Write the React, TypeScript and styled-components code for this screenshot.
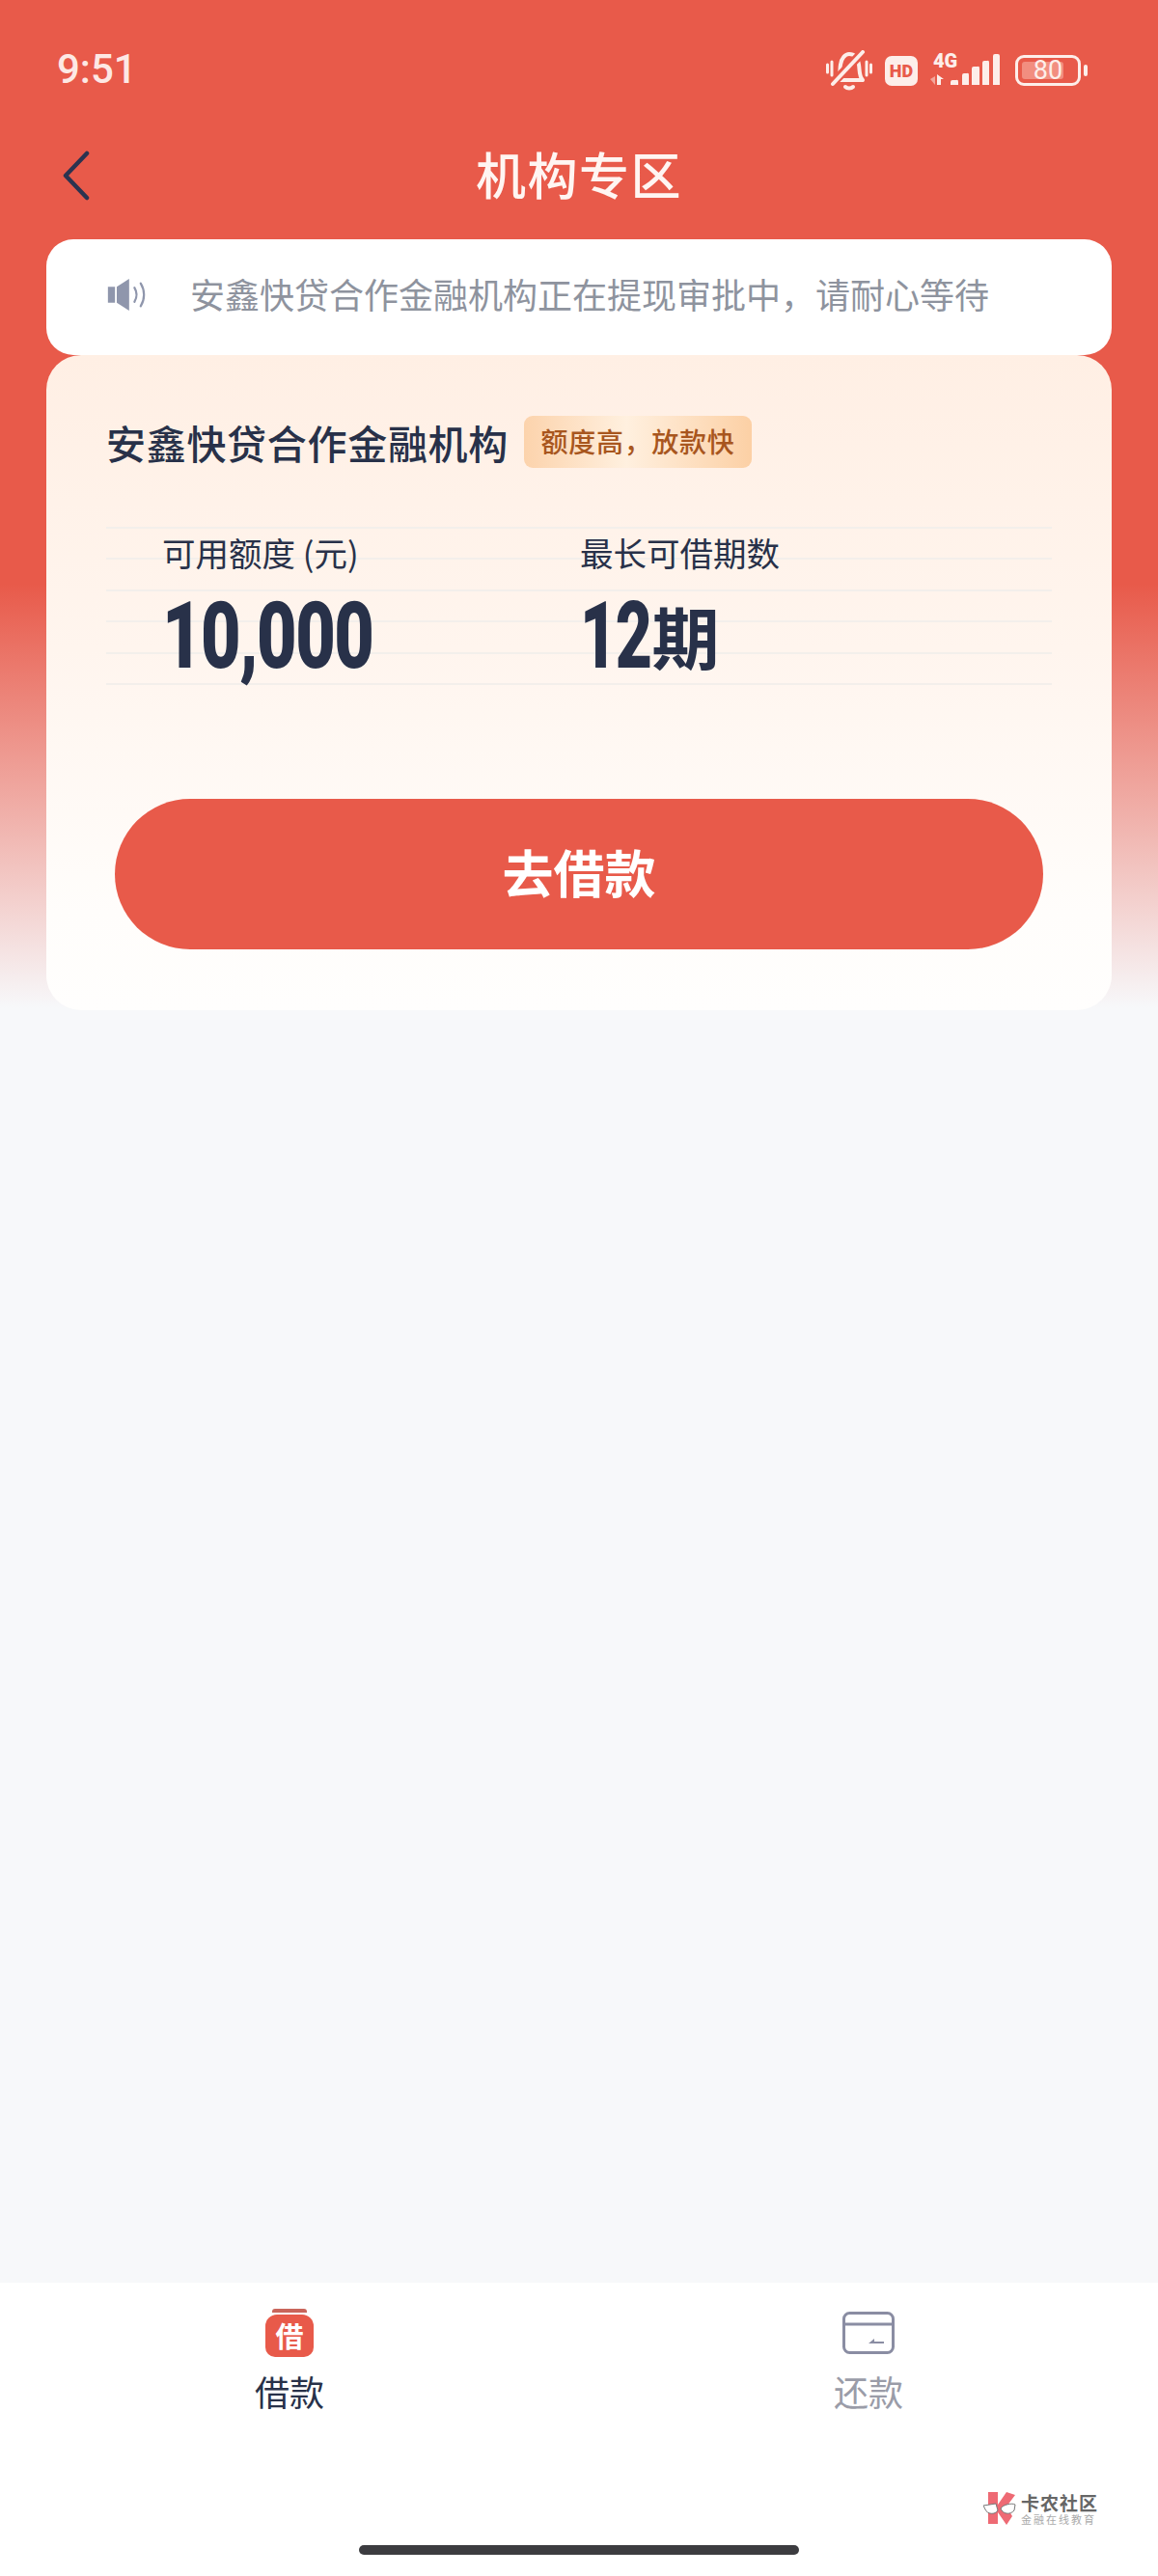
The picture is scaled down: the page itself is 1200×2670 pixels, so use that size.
import React from "react";
import styled, { createGlobalStyle } from "styled-components";

const CJK = `"Noto Sans CJK SC", "Noto Sans", sans-serif`;

const App = () => {
   return (
      <Page>
         <GlobalStyle />
         <StatusBar>
            <Time>9:51</Time>
            <StatusIcons>
               <MuteIcon />
               <HdBadge>HD</HdBadge>
               <SignalSlot><SignalIcon /></SignalSlot>
               <Battery>
                  <BatteryBody>
                     <BatteryLevel />
                     <BatteryText>80</BatteryText>
                  </BatteryBody>
                  <BatteryNub />
               </Battery>
            </StatusIcons>
         </StatusBar>
         <Header>
            <BackButton>
               <svg width="30" height="52" viewBox="0 0 30 52" fill="none">
                  <path d="M26 3 L4 26 L26 49" stroke="#2b3350" strokeWidth="4.5" strokeLinecap="round" strokeLinejoin="round" />
               </svg>
            </BackButton>
            <Title>机构专区</Title>
         </Header>
         <Content>
            <Notice>
               <SpeakerSlot><SpeakerIcon /></SpeakerSlot>
               <NoticeText>安鑫快贷合作金融机构正在提现审批中，请耐心等待</NoticeText>
            </Notice>
            <Card>
               <CardHead>
                  <CardTitle>安鑫快贷合作金融机构</CardTitle>
                  <Tag>额度高，放款快</Tag>
               </CardHead>
               <Stats>
                  <Stat $width={433}>
                     <StatLabel>可用额度 (元)</StatLabel>
                     <StatValue><Digits $scale={0.74}>10,000</Digits></StatValue>
                  </Stat>
                  <Stat>
                     <StatLabel>最长可借期数</StatLabel>
                     <StatValue><Digits $scale={0.68}>12</Digits><Unit>期</Unit></StatValue>
                  </Stat>
               </Stats>
               <BorrowButton>去借款</BorrowButton>
            </Card>
         </Content>
         <TabBar>
            <Tabs>
               <Tab>
                  <BorrowIcon>
                     <BorrowLid />
                     <BorrowBody>借</BorrowBody>
                  </BorrowIcon>
                  <TabLabel $active>借款</TabLabel>
               </Tab>
               <Tab>
                  <RepaySlot><RepayIcon /></RepaySlot>
                  <TabLabel>还款</TabLabel>
               </Tab>
            </Tabs>
            <HomeIndicator />
            <Watermark>
               <WatermarkLogo />
               <WatermarkText>
                  <WatermarkName>卡农社区</WatermarkName>
                  <WatermarkSub>金融在线教育</WatermarkSub>
               </WatermarkText>
            </Watermark>
         </TabBar>
      </Page>
   );
};

const MuteIcon = () => (
   <svg width="48" height="42" viewBox="0 0 48 42" fill="none" stroke="#fdeeea" strokeLinecap="round">
      <path d="M12 31 C15 27 14 20 15 15 C16 8 20 4 24 4 C30 4 33 9 34 15 C35 21 34 27 38 31 Z" strokeWidth="4" strokeLinejoin="round" />
      <path d="M20 38 C22 40 26 40 28 38" strokeWidth="4" />
      <path d="M7 34 L38 2" strokeWidth="9" stroke="#e85a4a" />
      <path d="M7 35 L38 2" strokeWidth="4" />
      <path d="M1.5 15 V23 M6 12 V26 M42 12 V26 M46.5 15 V23" strokeWidth="3" />
   </svg>
);

const SignalIcon = () => (
   <svg width="72" height="40" viewBox="0 -6 72 40" fill="none">
      <path d="M0 27 L5 24 V33 Z" fill="#f3a69b" />
      <path d="M7 22 L14 27 H11 V33 H7 Z" fill="#fdeeea" />
      <path d="M21 33 V30 Q21 28 23 28 H27 Q29 27 29 30 V33 Z M33 33 V23 Q33 21 35 21 H38 Q40 20 40 23 V33 Z M43 33 V16 Q43 14 45 14 H49 Q51 13 51 16 V33 Z M54 33 V10 Q54 8 56 8 H59 Q61 7 61 10 V33 Z M65 33 V3 Q65 1 67 1 H70 Q72 1 72 3 V33 Z" fill="#fdeeea" />
      <SignalText x="3" y="15">4G</SignalText>
   </svg>
);

const SpeakerIcon = () => (
   <svg width="44" height="33" viewBox="0 0 44 36" fill="none">
      <path d="M0 9 H8 V27 H0 Z" fill="#8f96ac" />
      <path d="M10 9 L24 0 V36 L10 27 Z" fill="#8f96ac" />
      <path d="M30 10 C33 15 33 21 30 26" stroke="#8f96ac" strokeWidth="2.4" strokeLinecap="round" />
      <path d="M37 5 C42 13 42 23 37 31" stroke="#8f96ac" strokeWidth="2.4" strokeLinecap="round" />
   </svg>
);

const RepayIcon = () => (
   <svg width="54" height="44" viewBox="0 0 54 44" fill="none">
      <rect x="1.5" y="1.5" width="51" height="41" rx="6" stroke="#8a8da3" strokeWidth="3" />
      <path d="M1.5 13 H52.5" stroke="#8a8da3" strokeWidth="3" />
      <path d="M27 33 L33 28 V31 H43 V33 Z" fill="#8a8da3" />
   </svg>
);

const WatermarkLogo = () => (
   <svg width="36" height="36" viewBox="0 0 36 36">
      <path d="M5 1 H15 V14 L24 1 L33 4 L24 16 L30 26 L24 35 L15 22 V34 H5 Z" fill="#ee6a74" />
      <path d="M0 15 L13 13 L15 20 C12 25 4 24 2 19 Z M18 18 C20 14 30 12 33 14 L32 20 C28 25 20 24 18 18 Z" fill="#fff" stroke="#777" strokeWidth="1" />
   </svg>
);

const GlobalStyle = createGlobalStyle`
   html, body {
      margin: 0;
      padding: 0;
      background: #f7f8fa;
   }

   * {
      box-sizing: border-box;
   }
`;

const Page = styled.div`
   position: relative;
   width: 1200px;
   height: 2670px;
   display: flex;
   flex-flow: column;
   font-family: ${CJK};
   background: linear-gradient(to bottom, #e85a4a 0, #e85a4a 605px, #f7f8fa 1045px, #f7f8fa 100%);
`;

const StatusBar = styled.div`
   height: 144px;
   padding: 52px 73px 0 59px;
   display: flex;
   justify-content: space-between;
   align-items: flex-start;
`;

const Time = styled.div`
   font-family: Roboto, sans-serif;
   font-size: 42px;
   font-weight: 500;
   line-height: 40px;
   color: #fde8e4;
`;

const StatusIcons = styled.div`
   display: flex;
   align-items: center;
   height: 42px;
   gap: 13px;
`;

const HdBadge = styled.div`
   width: 34px;
   height: 31px;
   border-radius: 7px;
   background: #fdeeea;
   color: #e85a4a;
   font-family: Roboto, sans-serif;
   font-weight: 900;
   font-size: 18px;
   line-height: 31px;
   text-align: center;
`;

const SignalSlot = styled.div`
   display: flex;
   margin-bottom: 8px;
`;

const SignalText = styled.text`
   font-family: Roboto, sans-serif;
   font-weight: 900;
   font-size: 20px;
   fill: #fdeeea;
`;

const Battery = styled.div`
   display: flex;
   align-items: center;
   gap: 3px;
   margin-left: 3px;
`;

const BatteryBody = styled.div`
   position: relative;
   width: 68px;
   height: 32px;
   border: 3px solid #fdeeea;
   border-radius: 9px;
   display: flex;
   align-items: center;
   justify-content: center;
`;

const BatteryLevel = styled.div`
   position: absolute;
   left: 4px;
   top: 4px;
   bottom: 4px;
   width: 43px;
   border-radius: 3px;
   background: #f28e80;
`;

const BatteryText = styled.span`
   position: relative;
   font-family: Roboto, sans-serif;
   font-size: 27px;
   line-height: 26px;
   color: #fdeeea;
`;

const BatteryNub = styled.div`
   width: 4px;
   height: 12px;
   border-radius: 2px;
   background: #fdeeea;
`;

const Header = styled.div`
   position: relative;
   height: 104px;
   display: flex;
   align-items: flex-start;
   justify-content: center;
`;

const BackButton = styled.div`
   position: absolute;
   left: 64px;
   top: 12px;
   line-height: 0;
`;

const Title = styled.h1`
   margin: -2px 0 0;
   height: 76px;
   font-size: 52px;
   line-height: 76px;
   font-weight: 500;
   letter-spacing: 1.5px;
   color: #fff5f2;
`;

const Content = styled.div`
   flex: 1;
   padding: 0 48px;
`;

const Notice = styled.div`
   height: 120px;
   padding: 0 0 8px 62px;
   display: flex;
   align-items: center;
   gap: 43px;
   background: #fff;
   border-radius: 28px;
`;

const SpeakerSlot = styled.div`
   display: flex;
   padding-top: 2px;
`;

const NoticeText = styled.div`
   font-size: 36px;
   color: #8e939e;
   white-space: nowrap;
`;

const Card = styled.div`
   height: 679px;
   padding: 62px 62px 0 62px;
   border-radius: 36px;
   background: linear-gradient(to bottom, #ffefe4 0%, #fff5ee 45%, #fffdfb 85%, #fffefd 100%);
`;

const CardHead = styled.div`
   display: flex;
   align-items: center;
   gap: 16px;
   height: 56px;
`;

const CardTitle = styled.div`
   font-size: 41px;
   font-weight: 500;
   letter-spacing: 0.7px;
   color: #283149;
   white-space: nowrap;
`;

const Tag = styled.div`
   width: 236px;
   height: 54px;
   border-radius: 9px;
   text-align: center;
   font-size: 28px;
   line-height: 52px;
   letter-spacing: 0.7px;
   font-weight: 500;
   color: #a8561e;
   background: linear-gradient(to right, #fcd3ac, #fff0df 45%, #fcd0a5);
`;

const Stats = styled.div`
   width: 980px;
   height: 164px;
   margin-top: 60px;
   padding-left: 58px;
   display: flex;
   background: repeating-linear-gradient(to bottom, #f3efeb 0, #f3efeb 2px, transparent 2px, transparent 32.4px);
`;

const Stat = styled.div<{ $width?: number }>`
   width: ${(p) => (p.$width ? `${p.$width}px` : "auto")};
   display: flex;
   flex-flow: column;
`;

const StatLabel = styled.div`
   height: 58px;
   padding-top: 3px;
   font-size: 34.5px;
   line-height: 46px;
   color: #283149;
   white-space: nowrap;
`;

const StatValue = styled.div`
   display: flex;
   align-items: center;
   height: 92px;
   padding-top: 18px;
   color: #283149;
`;

const Digits = styled.span<{ $scale: number }>`
   display: inline-block;
   font-family: Roboto, sans-serif;
   font-weight: 900;
   font-size: 97px;
   line-height: 92px;
   letter-spacing: -2px;
   transform: scaleX(${(p) => p.$scale});
   transform-origin: left center;
`;

const Unit = styled.span`
   margin-left: -34px;
   font-size: 70px;
   font-weight: 700;
   line-height: 92px;
`;

const BorrowButton = styled.div`
   width: 962px;
   height: 156px;
   margin: 118px 0 0 9px;
   border-radius: 78px;
   background: #e85a4a;
   color: #fff;
   font-size: 53px;
   font-weight: 700;
   line-height: 150px;
   text-align: center;
`;

const TabBar = styled.div`
   height: 304px;
   background: #fff;
   display: flex;
   flex-flow: column;
   align-items: center;
`;

const Tabs = styled.div`
   width: 100%;
   display: grid;
   grid-template-columns: 600px 600px;
   padding-top: 25px;
`;

const Tab = styled.div`
   display: flex;
   flex-flow: column;
   align-items: center;
   height: 247px;
`;

const BorrowIcon = styled.div`
   width: 50px;
   height: 52px;
   padding-top: 2px;
   display: flex;
   flex-flow: column;
   align-items: center;
   gap: 2px;
`;

const BorrowLid = styled.div`
   width: 36px;
   height: 4px;
   border-radius: 3px 3px 0 0;
   background: #c9655b;
`;

const BorrowBody = styled.div`
   width: 50px;
   height: 44px;
   border-radius: 12px 12px 10px 10px;
   background: #e85a4a;
   font-size: 29px;
   font-weight: 700;
   line-height: 42px;
   text-align: center;
   color: #fff;
`;

const RepaySlot = styled.div`
   height: 52px;
   padding-top: 5px;
   line-height: 0;
`;

const TabLabel = styled.div<{ $active?: boolean }>`
   margin-top: 12px;
   font-size: 36px;
   line-height: 46px;
   color: ${(p) => (p.$active ? "#283149" : "#9a9ca8")};
`;

const HomeIndicator = styled.div`
   width: 456px;
   height: 10px;
   border-radius: 5px;
   background: #3c3c40;
`;

const Watermark = styled.div`
   position: absolute;
   right: 62px;
   top: 2582px;
   display: flex;
   align-items: center;
   gap: 3px;
`;

const WatermarkText = styled.div`
   display: flex;
   flex-flow: column;
`;

const WatermarkName = styled.div`
   font-size: 19px;
   line-height: 21px;
   font-weight: 700;
   letter-spacing: 1px;
   color: #666;
`;

const WatermarkSub = styled.div`
   font-size: 11px;
   line-height: 14px;
   letter-spacing: 2px;
   color: #aaa;
`;

export default App;
